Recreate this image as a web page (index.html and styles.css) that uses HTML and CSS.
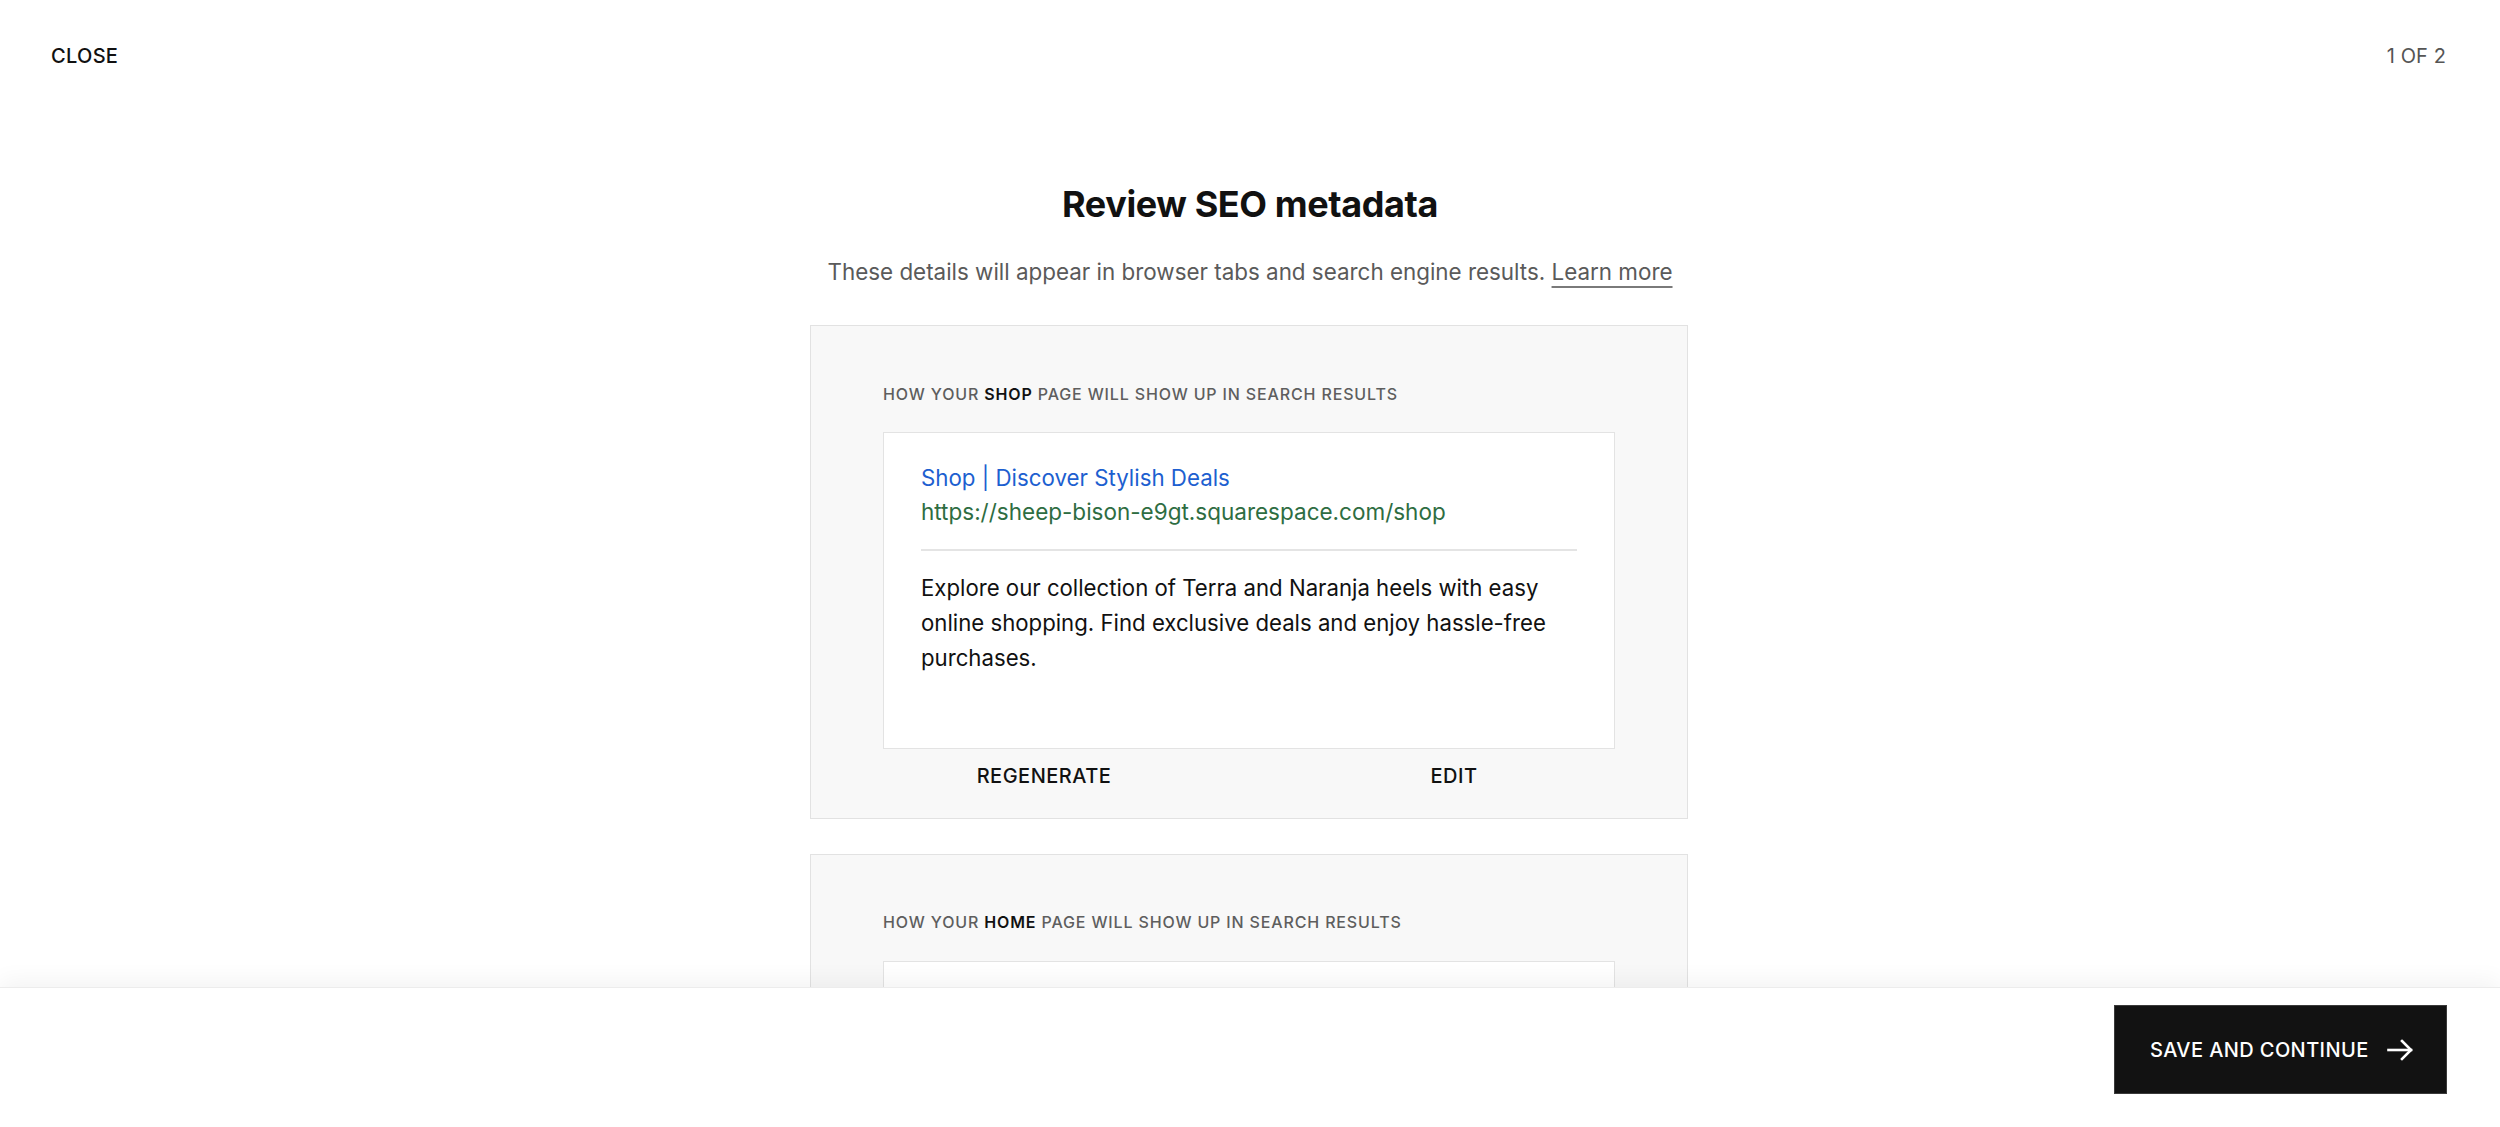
FILE: index.html
```html
<!DOCTYPE html>
<html lang="en">
<head>
<meta charset="utf-8">
<title>Review SEO metadata</title>
<link rel="stylesheet" href="styles.css">
</head>
<body>
<div class="app">
  <header class="topbar">
    <button class="close-btn">CLOSE</button>
    <span class="step">1 OF 2</span>
  </header>
  <main class="main">
    <h1 class="title">Review SEO metadata</h1>
    <p class="subtitle">These details will appear in browser tabs and search engine results. <a class="learn" href="#">Learn more</a></p>

    <section class="card">
      <div class="label">HOW YOUR <strong>SHOP</strong> PAGE WILL SHOW UP IN SEARCH RESULTS</div>
      <div class="preview">
        <div class="p-title">Shop | Discover Stylish Deals</div>
        <div class="p-url">https://sheep-bison-e9gt.squarespace.com/shop</div>
        <div class="p-divider"></div>
        <div class="p-desc">Explore our collection of Terra and Naranja heels with easy online shopping. Find exclusive deals and enjoy hassle-free purchases.</div>
      </div>
      <div class="actions">
        <button class="action">REGENERATE</button>
        <button class="action">EDIT</button>
      </div>
    </section>

    <section class="card">
      <div class="label">HOW YOUR <strong>HOME</strong> PAGE WILL SHOW UP IN SEARCH RESULTS</div>
      <div class="preview preview-empty"></div>
    </section>
  </main>
  <footer class="footer">
    <button class="save-btn">SAVE AND CONTINUE
      <svg class="arrow" width="27" height="22" viewBox="0 0 27 22" fill="none" stroke="#fff" stroke-width="2.6" stroke-linecap="square" stroke-linejoin="miter"><path d="M1.5 11H24"/><path d="M15 2L24 11L15 20"/></svg>
    </button>
  </footer>
</div>
</body>
</html>
```

FILE: styles.css
```css
* { box-sizing: border-box; }
html, body { margin: 0; padding: 0; }
body {
  font-family: Inter, "Noto Sans", "Liberation Sans", sans-serif;
  color: #111;
  background: #fff;
}
.app {
  height: 100vh;
  display: flex;
  flex-direction: column;
  overflow: hidden;
}
.topbar {
  display: flex;
  justify-content: space-between;
  align-items: center;
  padding: 44px 54px 0 51px;
  flex: none;
}
.close-btn {
  background: none;
  border: 0;
  padding: 0;
  font: 500 20px/24px Inter, sans-serif;
  letter-spacing: 0.3px;
  color: #111;
}
.step {
  font: 400 20px/24px Inter, sans-serif;
  letter-spacing: 0.1px;
  color: #555;
}
.main {
  flex: 1;
  overflow: hidden;
  display: flex;
  flex-direction: column;
  align-items: center;
  padding-top: 114px;
}
.title {
  margin: 0;
  font-weight: 700;
  font-size: 36px;
  line-height: 44px;
  letter-spacing: -0.4px;
  color: #111;
}
.subtitle {
  margin: 30px 0 0;
  font-size: 22.4px;
  line-height: 32px;
  color: #5a5a5a;
}
.learn {
  color: #5a5a5a;
  text-decoration: underline;
  text-decoration-thickness: 2px;
  text-underline-offset: 6px;
  text-decoration-color: #7a7a7a;
}
.card {
  flex: none;
  width: 878px;
  margin-top: 37px;
  margin-right: 2px;
  background: #f8f8f8;
  border: 1px solid #e2e2e2;
  padding: 57.5px 72px 15.5px;
}
.card + .card { margin-top: 34.5px; }
.label {
  font-size: 16px;
  line-height: 20px;
  font-weight: 500;
  letter-spacing: 0.85px;
  color: #5e5e5e;
}
.label strong {
  font-weight: 600;
  color: #111;
}
.preview {
  margin-top: 28.5px;
  background: #fff;
  border: 1px solid #e3e3e3;
  padding: 28px 37px 73px;
}
.preview-empty {
  min-height: 316px;
}
.p-title {
  font-size: 22.3px;
  line-height: 34px;
  color: #1d5fd0;
}
.p-url {
  font-size: 22.5px;
  line-height: 34px;
  color: #2e6d42;
}
.p-divider {
  height: 2px;
  background: #e4e4e4;
  margin: 20px 0 18.5px;
}
.p-desc {
  font-size: 22.2px;
  line-height: 35px;
  color: #111;
}
.actions {
  display: flex;
  justify-content: space-between;
  padding: 0 60px;
}
.action {
  width: 202px;
  background: none;
  border: 0;
  padding: 15px 0;
  font: 500 20px/24px Inter, sans-serif;
  letter-spacing: 0.5px;
  color: #111;
  text-align: center;
}
.footer {
  position: relative;
  z-index: 1;
  flex: none;
  height: 140px;
  background: #fff;
  border-top: 1px solid #ececec;
  box-shadow: 0 -6px 22px rgba(0, 0, 0, 0.05);
  display: flex;
  justify-content: flex-end;
  align-items: flex-start;
  padding: 17px 53px 0;
}
.save-btn {
  display: flex;
  align-items: center;
  gap: 18px;
  height: 89px;
  width: 333px;
  padding: 0 36px 0 35px;
  background: #121212;
  border: 1px solid #3a3a3a;
  color: #fff;
  font: 500 20px/24px Inter, sans-serif;
  letter-spacing: 0.4px;
  white-space: nowrap;
}
.arrow { flex: none; }
```
